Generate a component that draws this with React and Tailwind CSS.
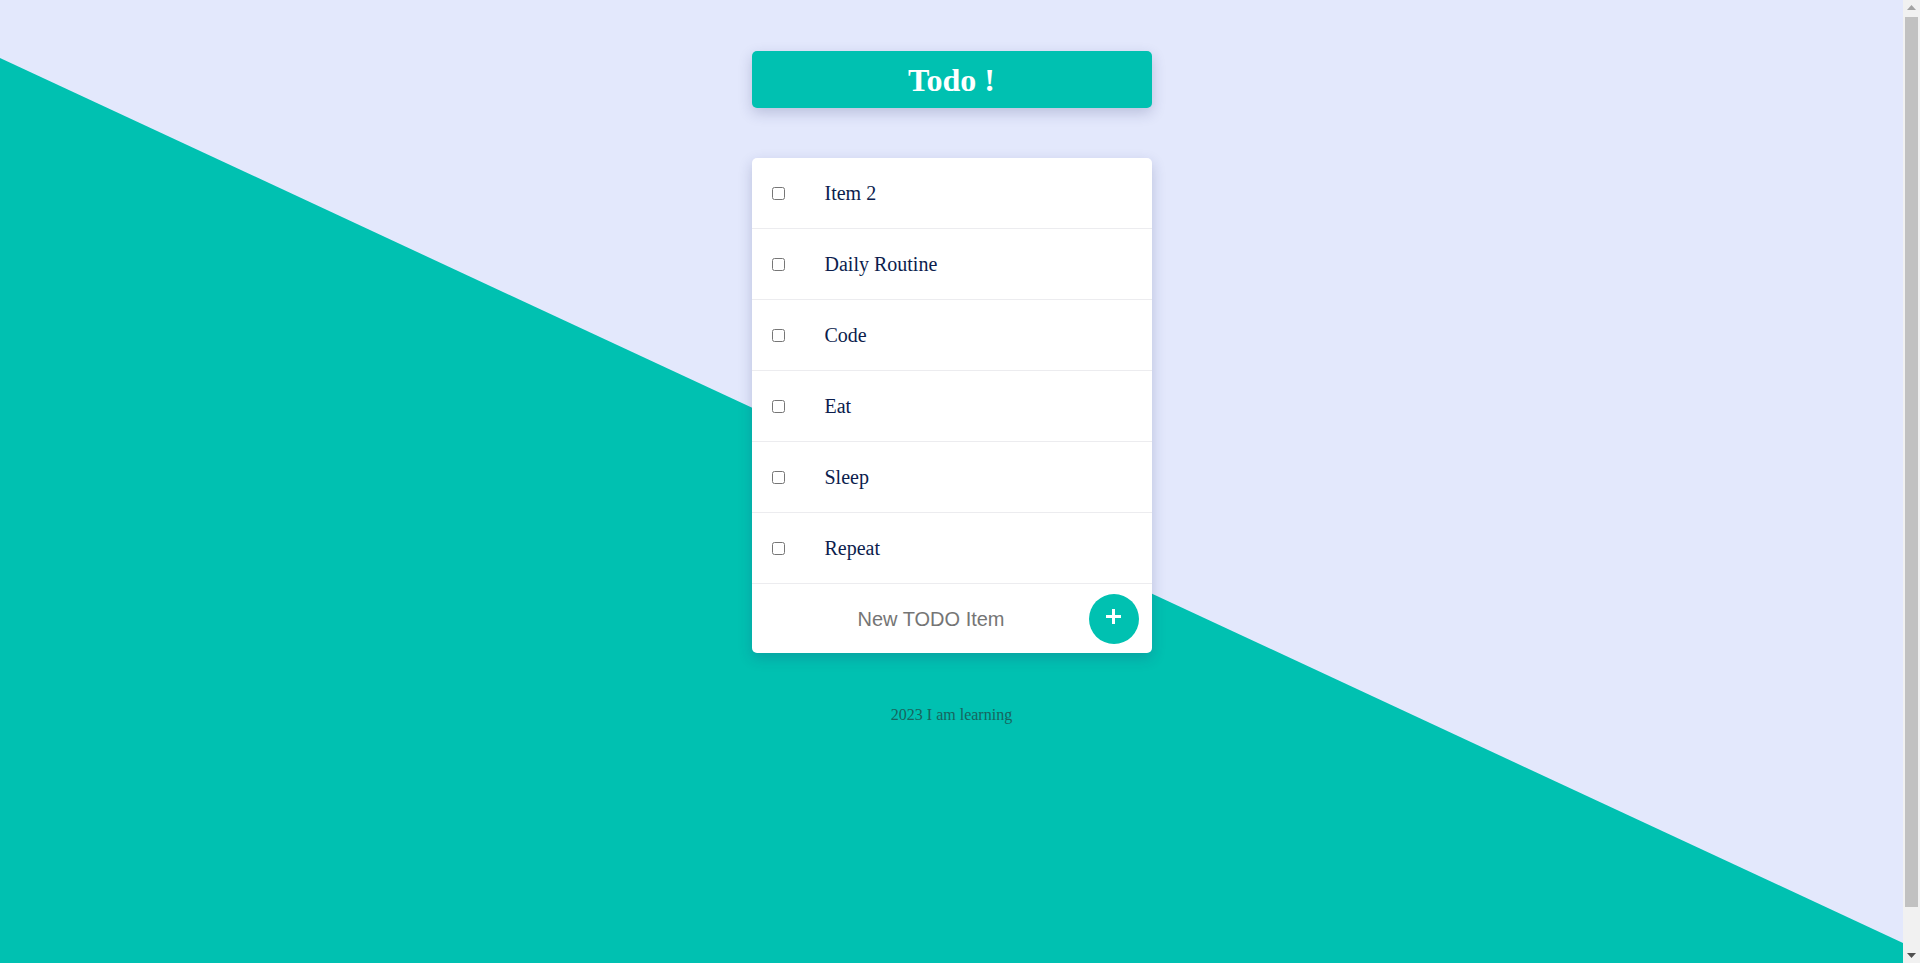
import React from "react";

const items = ["Item 2", "Daily Routine", "Code", "Eat", "Sleep", "Repeat"];

function TodoRow({ label }) {
  return (
    <div className="flex items-center h-[71px] border-b border-[#ececef] pl-[20px]">
      <input type="checkbox" className="w-[13px] h-[13px] m-0" />
      <span className="ml-[40px] text-[20px] text-[#0c1d4d]">{label}</span>
    </div>
  );
}

function Scrollbar() {
  return (
    <div className="w-[17px] shrink-0 bg-[#f1f1f1] flex flex-col items-center">
      <div className="h-[15px] flex items-center justify-center">
        <svg width="9" height="5" viewBox="0 0 9 5">
          <path d="M4.5 0L9 5H0z" fill="#a3a3a3" />
        </svg>
      </div>
      <div className="mt-[2px] w-[13px] h-[890px] bg-[#c1c1c1]" />
      <div className="flex-1" />
      <div className="h-[15px] flex items-center justify-center">
        <svg width="9" height="5" viewBox="0 0 9 5">
          <path d="M0 0H9L4.5 5z" fill="#505050" />
        </svg>
      </div>
    </div>
  );
}

export default function App() {
  return (
    <div className="flex h-[963px] overflow-hidden font-['Liberation_Serif',serif]">
      <main className="relative flex-1 overflow-hidden bg-[#e3e8fc]">
        {/* teal diagonal backdrop */}
        <div className="absolute inset-0 bg-[#00c1b1] [clip-path:polygon(0_58px,100%_943px,100%_100%,0_100%)]" />

        <div className="relative flex flex-col items-center pt-[51px]">
          <div className="w-[400px] h-[57px] flex items-center justify-center rounded-[5px] bg-[#00c1b1] shadow-[0_5px_14px_rgba(40,50,110,0.22)]">
            <h1 className="text-[32px] font-bold text-white leading-none">Todo !</h1>
          </div>

          <div className="mt-[50px] w-[400px] rounded-[5px] bg-white shadow-[0_5px_14px_rgba(40,50,110,0.22)]">
            {items.map((item) => (
              <TodoRow key={item} label={item} />
            ))}
            <div className="flex items-center h-[69px] pr-[13px]">
              <input
                type="text"
                placeholder="New TODO Item"
                className="flex-1 min-w-0 pl-[22px] text-center text-[20px] font-['Liberation_Sans',Arial,sans-serif] outline-none placeholder:text-[#757575] bg-transparent"
              />
              <button className="w-[50px] h-[50px] rounded-full bg-[#00c1b1] flex items-center justify-center">
                <svg width="15" height="15" viewBox="0 0 15 15" className="-mt-[4px]">
                  <path d="M7.5 0v15M0 7.5h15" stroke="white" strokeWidth="3" />
                </svg>
              </button>
            </div>
          </div>

          <p className="mt-[50px] text-[16px] text-[#17655e]">2023 I am learning</p>
        </div>
      </main>
      <Scrollbar />
    </div>
  );
}
